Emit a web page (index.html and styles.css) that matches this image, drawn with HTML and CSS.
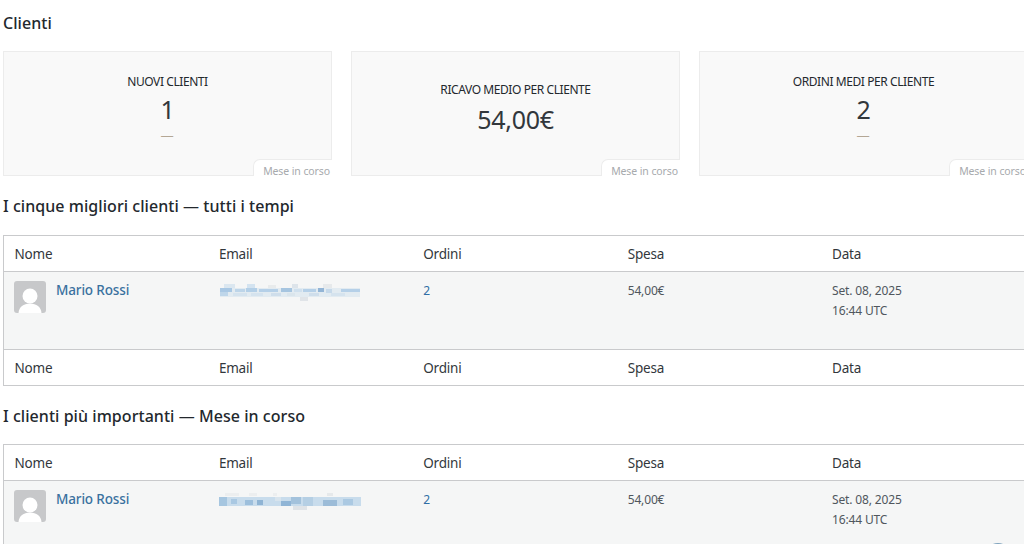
FILE: index.html
```html
<!DOCTYPE html>
<html lang="it">
<head>
<meta charset="utf-8">
<title>Clienti</title>
<link rel="stylesheet" href="styles.css">
</head>
<body>
<main class="page">
  <h2 class="heading first">Clienti</h2>
  <section class="cards">
    <div class="card">
      <div class="card-title">Nuovi clienti</div>
      <div class="card-value">1</div>
      <div class="card-delta">—</div>
      <div class="card-tab">Mese in corso</div>
    </div>
    <div class="card card-plain">
      <div class="card-title">Ricavo medio per cliente</div>
      <div class="card-value">54,00€</div>
      <div class="card-tab">Mese in corso</div>
    </div>
    <div class="card">
      <div class="card-title">Ordini medi per cliente</div>
      <div class="card-value">2</div>
      <div class="card-delta">—</div>
      <div class="card-tab">Mese in corso</div>
    </div>
  </section>

  <h2 class="heading top-five">I cinque migliori clienti — tutti i tempi</h2>
  <table class="list">
    <thead><tr><th>Nome</th><th>Email</th><th>Ordini</th><th>Spesa</th><th>Data</th></tr></thead>
    <tbody><tr>
      <td>
        <div class="who">
          <svg class="avatar" viewBox="0 0 32 32"><rect width="32" height="32" rx="3" fill="#c7c8ca"/><circle cx="16" cy="15" r="7.500" fill="#fff"/><path d="M4.500 32c.5-6 5-9.500 11.500-9.500S27 26 27.500 32z" fill="#fff"/></svg>
          <a class="name" href="#">Mario Rossi</a>
        </div>
      </td>
      <td><svg class="blur" viewBox="0 0 142 18" width="142" height="18">
        <rect x="1" y="5" width="140" height="9" fill="#e2ebf1"/>
        <rect x="5" y="1" width="11" height="4" fill="#dbe7f0"/><rect x="28" y="1" width="8" height="4" fill="#d3e3f0"/><rect x="49" y="2" width="8" height="3" fill="#e8ebec"/><rect x="73" y="1" width="6" height="4" fill="#dde4ea"/><rect x="104" y="1" width="9" height="4" fill="#e6e9eb"/><rect x="81" y="14" width="8" height="4" fill="#e0e4e8"/>
        <rect x="1" y="5" width="12" height="4" fill="#a9c8e4"/><rect x="16" y="6" width="10" height="3" fill="#bdd5e9"/><rect x="27" y="5" width="11" height="4" fill="#b3cfe7"/><rect x="40" y="6" width="19" height="3" fill="#b5d0e8"/><rect x="62" y="5" width="11" height="4" fill="#a6c5e0"/><rect x="75" y="6" width="8" height="3" fill="#cfe0ee"/><rect x="84" y="6" width="13" height="3" fill="#b5d0e8"/><rect x="99" y="5" width="6" height="4" fill="#93b5d6"/><rect x="107" y="6" width="6" height="4" fill="#c6d9ea"/><rect x="122" y="6" width="19" height="3" fill="#b5d0e8"/>
        <rect x="1" y="9" width="8" height="4" fill="#bed6ea"/><rect x="14" y="10" width="14" height="3" fill="#d5e3ee"/><rect x="32" y="10" width="12" height="3" fill="#d5e3ee"/><rect x="52" y="10" width="10" height="3" fill="#cfdeeb"/><rect x="68" y="10" width="8" height="3" fill="#dae5ec"/><rect x="90" y="10" width="10" height="3" fill="#cfdeeb"/><rect x="112" y="10" width="14" height="3" fill="#d5e3ee"/>
      </svg></td>
      <td><a class="count" href="#">2</a></td>
      <td>54,00€</td>
      <td class="date">Set. 08, 2025<br>16:44 UTC</td>
    </tr></tbody>
    <tfoot><tr><th>Nome</th><th>Email</th><th>Ordini</th><th>Spesa</th><th>Data</th></tr></tfoot>
  </table>

  <h2 class="heading second">I clienti più importanti — Mese in corso</h2>
  <table class="list">
    <thead><tr><th>Nome</th><th>Email</th><th>Ordini</th><th>Spesa</th><th>Data</th></tr></thead>
    <tbody><tr>
      <td>
        <div class="who">
          <svg class="avatar" viewBox="0 0 32 32"><rect width="32" height="32" rx="3" fill="#c7c8ca"/><circle cx="16" cy="15" r="7.500" fill="#fff"/><path d="M4.500 32c.5-6 5-9.500 11.500-9.500S27 26 27.500 32z" fill="#fff"/></svg>
          <a class="name" href="#">Mario Rossi</a>
        </div>
      </td>
      <td><svg class="blur" viewBox="0 0 142 18" width="142" height="18">
        <rect x="0" y="5" width="142" height="9" fill="#c8dcec"/>
        <rect x="6" y="1" width="14" height="3" fill="#eceeef"/><rect x="30" y="1" width="8" height="3" fill="#eceeef"/><rect x="54" y="1" width="4" height="3" fill="#eceeef"/><rect x="108" y="1" width="6" height="3" fill="#e6e9eb"/><rect x="74" y="14" width="14" height="4" fill="#dfe3e7"/>
        <rect x="0" y="5" width="8" height="9" fill="#a6c6e0"/><rect x="12" y="7" width="6" height="5" fill="#a9c8e2"/><rect x="26" y="8" width="8" height="5" fill="#9dbfdc"/><rect x="38" y="8" width="6" height="5" fill="#8fb4d4"/><rect x="56" y="5" width="6" height="4" fill="#d8e4ed"/><rect x="62" y="9" width="10" height="5" fill="#90b5d6"/><rect x="72" y="5" width="10" height="7" fill="#a3c2dc"/><rect x="84" y="5" width="10" height="9" fill="#b5cfe4"/><rect x="104" y="8" width="14" height="6" fill="#9cbcd8"/><rect x="124" y="7" width="10" height="6" fill="#abc9e2"/>
      </svg></td>
      <td><a class="count" href="#">2</a></td>
      <td>54,00€</td>
      <td class="date">Set. 08, 2025<br>16:44 UTC</td>
    </tr></tbody>
  </table>
</main>
<div class="float-btn"></div>
</body>
</html>
```
FILE: styles.css
```css
* { box-sizing: border-box; }
html, body { margin: 0; height: 544px; overflow: hidden; background: #fff; }
body { font-family: "Noto Sans", "Open Sans", sans-serif; color: #32373c; font-size: 13px; position: relative; }
.page { width: 1040px; height: 544px; overflow: hidden; padding-left: 3px; }
.heading { margin: 0; font-size: 16px; line-height: 22px; font-weight: 500; color: #23282d; letter-spacing: 0.05px; }
.first { padding-top: 12px; }
.cards { display: flex; gap: 19px; margin-top: 17px; }
.card { position: relative; flex: 0 0 329px; height: 125px; background: #f9f9f9; border: 1px solid #ececec; display: flex; flex-direction: column; align-items: center; justify-content: center; padding-bottom: 9px; }
.card-title { font-size: 12px; line-height: 16px; text-transform: uppercase; color: #23282d; letter-spacing: -0.42px; }
.card-value { font-size: 25px; line-height: 34px; color: #32373c; margin-top: 2px; letter-spacing: -0.3px; }
.card-plain .card-value { margin-top: 4px; }
.card-delta { font-size: 12px; line-height: 16px; color: #b4a795; margin-top: 2px; transform: scaleX(1.1); }
.card-tab { position: absolute; right: -1px; bottom: -1px; width: 79px; height: 17px; background: #fff; border-top: 1px solid #ececec; border-left: 1px solid #ececec; border-top-left-radius: 7px; padding: 3px 2px 0 0; font-size: 10.500px; line-height: 16px; color: #a7aaad; text-align: right; letter-spacing: -0.1px; white-space: nowrap; }
.top-five { margin-top: 19px; padding-bottom: 1px; }
.list { width: 1023px; margin-top: 17px; border-collapse: separate; border-spacing: 0; table-layout: fixed; border: 1px solid #c9cacc; border-right: 0; }
.list th { text-align: left; font-weight: 400; font-size: 13.500px; line-height: 20px; color: #32373c; padding: 8px 10.500px 7px; height: 35px; letter-spacing: -0.2px; background: #fff; }
.list thead th { border-bottom: 1px solid #c9cacc; }
.list tfoot th { border-top: 1px solid #c9cacc; }
.list td { vertical-align: top; background: #f5f6f6; height: 77px; padding: 9px 10.500px; font-size: 12px; line-height: 20px; color: #50575e; letter-spacing: -0.15px; }
.who { display: flex; align-items: flex-start; gap: 10px; margin-left: -0.500px; }
.avatar { width: 32px; height: 32px; flex: none; }
.name { color: #3a719f; font-weight: 500; font-size: 13.500px; line-height: 19px; text-decoration: none; letter-spacing: -0.15px; }
.count { color: #2f6ea5; text-decoration: none; }
.blur { display: block; margin-top: 2px; }
.date { color: #646970; font-size: 12px; letter-spacing: 0; }
.second { margin-top: 19px; }
.float-btn { position: absolute; left: 985px; top: 543px; width: 26px; height: 26px; border-radius: 50%; background: #7fa3bd; }
```
